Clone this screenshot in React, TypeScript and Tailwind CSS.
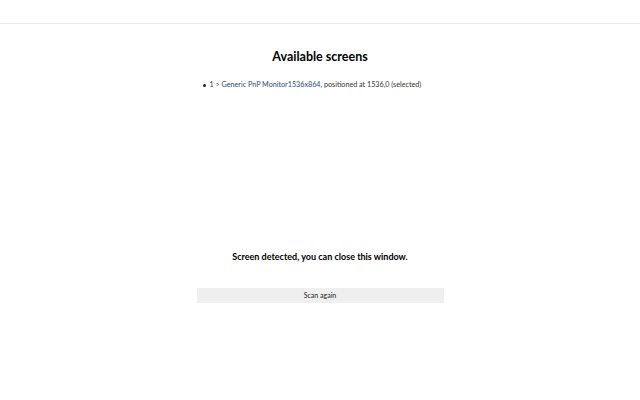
export default function App() {
  return (
    <div
      className="min-h-[400px] w-[640px] bg-white text-black"
      style={{ fontFamily: 'Lato, "Noto Sans", sans-serif' }}
    >
      <div className="h-[24px] border-b border-[#e8e8e8]" />
      <div className="mx-auto w-[247px]">
        <h1 className="mt-[25px] text-center text-[12.5px] font-bold leading-[16px]">
          Available screens
        </h1>
        <ul className="mt-[15px] text-[7.2px] leading-[10px] text-[#333]">
          <li className="flex items-center gap-[4px] pl-[6px]">
            <span className="h-[3px] w-[3px] shrink-0 rounded-full bg-[#222]" />
            <span>
              1 &gt;{" "}
              <span className="text-[#2c4a73]">Generic PnP Monitor1536x864</span>
              , positioned at 1536,0 (selected)
            </span>
          </li>
        </ul>
        <p className="mt-[161px] text-center text-[9px] font-bold leading-[12px]">
          Screen detected, you can close this window.
        </p>
        <button className="mt-[25px] h-[15px] w-full bg-[#efefef] text-center text-[7px] leading-[15px] text-[#222]">
          Scan again
        </button>
      </div>
    </div>
  );
}
